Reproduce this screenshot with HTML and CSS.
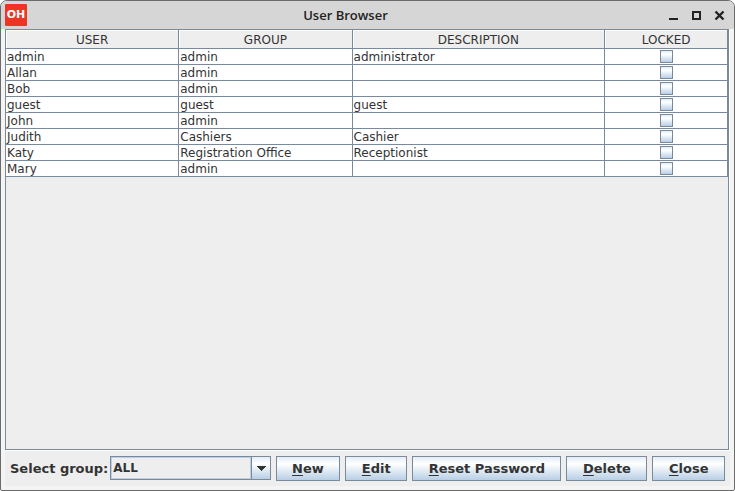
FILE: index.html
```html
<!DOCTYPE html>
<html lang="en">
<head>
<meta charset="utf-8">
<title>User Browser</title>
<link rel="stylesheet" href="styles.css">
</head>
<body>
<div class="window">
  <header class="titlebar">
    <span class="logo">OH</span>
    <h1 class="title">User Browser</h1>
    <div class="controls">
      <button type="button" class="control" aria-label="Minimize"><svg width="11" height="11" viewBox="0 0 11 11"><path d="M1 9h9" stroke="#222" stroke-width="2"/></svg></button>
      <button type="button" class="control" aria-label="Maximize"><svg width="11" height="11" viewBox="0 0 11 11"><path d="M2 2h7v7h-7z" fill="none" stroke="#222" stroke-width="2"/></svg></button>
      <button type="button" class="control" aria-label="Close window"><svg width="11" height="11" viewBox="0 0 11 11"><path d="M1.500 1.500l8 8M9.500 1.500l-8 8" stroke="#222" stroke-width="2.400"/></svg></button>
    </div>
  </header>
  <main class="content">
    <div class="scroll">
      <table class="users">
        <colgroup><col class="col-user"><col class="col-group"><col class="col-description"><col class="col-locked"></colgroup>
        <thead>
          <tr><th>USER</th><th>GROUP</th><th>DESCRIPTION</th><th>LOCKED</th></tr>
        </thead>
        <tbody>
          <tr><td>admin</td><td>admin</td><td>administrator</td><td><input type="checkbox" aria-label="admin locked"></td></tr>
          <tr><td>Allan</td><td>admin</td><td></td><td><input type="checkbox" aria-label="Allan locked"></td></tr>
          <tr><td>Bob</td><td>admin</td><td></td><td><input type="checkbox" aria-label="Bob locked"></td></tr>
          <tr><td>guest</td><td>guest</td><td>guest</td><td><input type="checkbox" aria-label="guest locked"></td></tr>
          <tr><td>John</td><td>admin</td><td></td><td><input type="checkbox" aria-label="John locked"></td></tr>
          <tr><td>Judith</td><td>Cashiers</td><td>Cashier</td><td><input type="checkbox" aria-label="Judith locked"></td></tr>
          <tr><td>Katy</td><td>Registration Office</td><td>Receptionist</td><td><input type="checkbox" aria-label="Katy locked"></td></tr>
          <tr><td>Mary</td><td>admin</td><td></td><td><input type="checkbox" aria-label="Mary locked"></td></tr>
        </tbody>
      </table>
    </div>
    <div class="toolbar">
      <div class="field">
        <label class="label" for="group">Select group:</label>
        <div class="combo">
          <select id="group"><option>ALL</option></select>
          <span class="arrow"><svg width="10" height="5" viewBox="0 0 10 5" shape-rendering="crispEdges"><path d="M0 0h10L5 5z" fill="#333"/></svg></span>
        </div>
      </div>
      <button type="button" class="button"><u>N</u>ew</button>
      <button type="button" class="button"><u>E</u>dit</button>
      <button type="button" class="button"><u>R</u>eset Password</button>
      <button type="button" class="button"><u>D</u>elete</button>
      <button type="button" class="button"><u>C</u>lose</button>
    </div>
  </main>
</div>
</body>
</html>
```
FILE: styles.css
```css
* { box-sizing: border-box; }

body {
  margin: 0;
  background: #fff;
  color: #333;
  font: 12px/15px "DejaVu Sans", sans-serif;
}

.window {
  display: flex;
  flex-direction: column;
  height: 100vh;
  border: 1px solid #6b6b6b;
  border-radius: 7px 7px 2px 2px;
  background: #f4f4f4;
  overflow: hidden;
}

.titlebar {
  display: grid;
  grid-template-columns: 64px 1fr 64px;
  align-items: center;
  height: 28px;
  padding: 0 4px;
  background: #d6d6d6;
}

.logo {
  width: 22px;
  height: 22px;
  border-radius: 1px;
  background: #ee3524;
  color: #fff;
  font: bold 11px/22px "DejaVu Sans", sans-serif;
  text-align: center;
}

.title {
  margin: 0;
  padding-right: 44px;
  color: #222;
  font: 600 13px/16px "Open Sans", sans-serif;
  text-align: center;
}

.controls {
  display: flex;
  justify-content: flex-end;
  gap: 12px;
  padding-right: 5px;
}

.control {
  display: block;
  width: 11px;
  height: 11px;
  padding: 0;
  border: 0;
  background: none;
}

.control svg { display: block; }

.content {
  display: flex;
  flex: 1;
  flex-direction: column;
  margin: 0 4px 4px;
  background: #eee;
}

.scroll {
  flex: 1;
  margin-right: 1px;
  border: 1px solid #7a8a99;
  box-shadow: 1px 1px #fff;
}

.users {
  width: 100%;
  border-collapse: separate;
  border-spacing: 0;
  table-layout: fixed;
}

.col-user,
.col-group { width: 24%; }
.col-description { width: 35%; }
.col-locked { width: 17%; }

.users th {
  height: 19px;
  padding: 2px 0 0;
  border-right: 1px solid #7a8a99;
  border-bottom: 1px solid #7a8a99;
  box-shadow: inset 1px 1px #fff;
  font-weight: normal;
}

.users td {
  height: 16px;
  padding: 2px 1px 0;
  border-right: 1px solid #7a8a99;
  border-bottom: 1px solid #7a8a99;
  background: #fff;
  line-height: 13px;
}

.users td:last-child {
  padding-top: 0;
  vertical-align: top;
}

.users input {
  appearance: none;
  display: block;
  width: 13px;
  height: 13px;
  margin: 1px auto 0;
  border: 1px solid #7a8a99;
  background: linear-gradient(#e4edf6, #fff 30%, #b8cfe5);
}

.toolbar {
  display: flex;
  align-items: flex-start;
  gap: 5px;
  padding: 6px 5px 5px;
}

.label,
.button {
  font: bold 13px/15px "DejaVu Sans", sans-serif;
}

.field {
  display: flex;
  flex: 3 1 36%;
  align-items: center;
  gap: 2px;
}

.label { white-space: nowrap; }

.combo {
  display: flex;
  flex: 1;
  height: 24px;
  border: 1px solid #7a8a99;
}

.combo select {
  appearance: none;
  flex: 1;
  min-width: 0;
  padding: 0 1px;
  border: 1px solid #b8cfe5;
  border-radius: 0;
  background: #eee;
  color: #333;
  font: bold 12px/15px "DejaVu Sans", sans-serif;
}

.arrow {
  display: grid;
  place-items: center;
  width: 19px;
  border-left: 1px solid #7a8a99;
  background: linear-gradient(#e4edf6, #fff 30%, #b8cfe5);
}

.button {
  flex: 1 1 auto;
  height: 25px;
  padding: 0 15px;
  border: 1px solid #7a8a99;
  border-radius: 0;
  background: linear-gradient(#e4edf6, #fff 30%, #b8cfe5);
  color: #333;
  white-space: nowrap;
}

.button u {
  text-decoration-thickness: 1px;
  text-underline-offset: 2px;
}
```
